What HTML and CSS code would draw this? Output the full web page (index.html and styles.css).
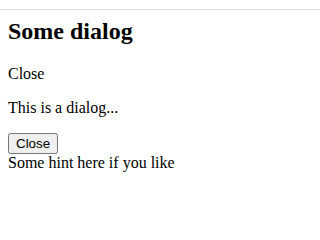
FILE: index.html
```html
<!DOCTYPE html>
<html>
<head>
<meta charset="utf-8">
<link rel="stylesheet" href="styles.css">
</head>
<body>
<div class="topbar"></div>
<div class="content">
  <h2 class="title">Some dialog</h2>
  <p class="text">Close</p>
  <p class="text">This is a dialog...</p>
  <div class="actions"><button class="btn">Close</button></div>
  <div class="hint">Some hint here if you like</div>
</div>
</body>
</html>
```
FILE: styles.css
```css
html, body {
  margin: 0;
  background: #fff;
}
body {
  font-family: "Liberation Serif", "Times New Roman", serif;
  font-size: 16px;
  color: #000;
}
.topbar {
  height: 9px;
  border-bottom: 1px solid #dcdcdc;
}
.content {
  padding: 8px;
}
.title {
  font-size: 24px;
  font-weight: bold;
  margin: 0 0 19.92px;
}
.text {
  margin: 16px 0;
}
.btn {
  font-family: "Liberation Sans", Arial, sans-serif;
  font-size: 13.333px;
}
```
